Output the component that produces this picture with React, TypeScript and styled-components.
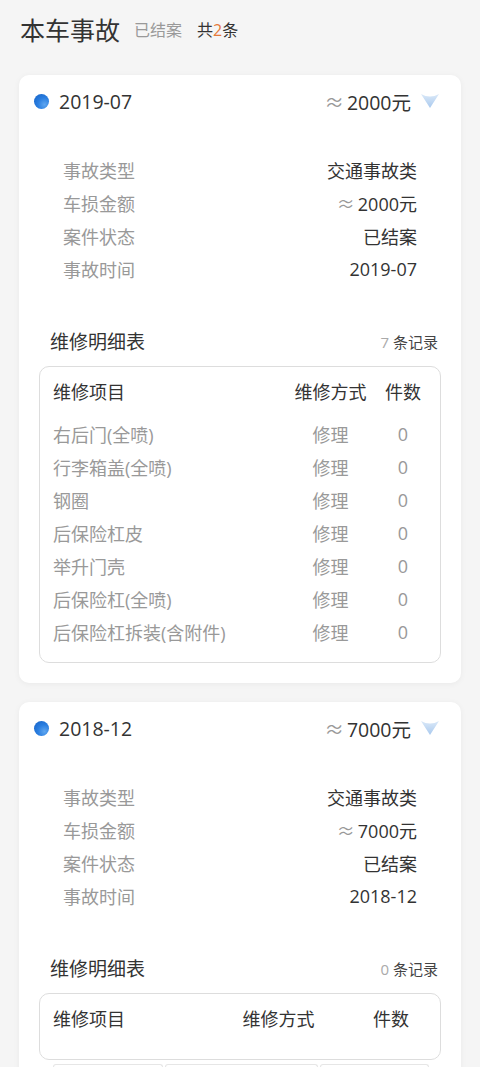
import styled, { createGlobalStyle } from "styled-components";

const GlobalStyle = createGlobalStyle`
  html, body {
    margin: 0;
    padding: 0;
    background: #f5f5f5;
  }
  body {
    font-family: "Open Sans", "Noto Sans CJK SC", sans-serif;
    color: #333;
  }
`;

const Page = styled.main`
  padding: 15px 19px 0;
  min-height: 1067px;
  box-sizing: border-box;
`;

const TitleRow = styled.div`
  display: flex;
  align-items: center;
  height: 30px;
  padding-left: 1px;
  margin-bottom: 30px;
`;

const Title = styled.h1`
  margin: 0;
  font-size: 25px;
  font-weight: 400;
  color: #333;
  line-height: 30px;
`;

const Status = styled.span`
  margin-left: 14px;
  font-size: 16px;
  color: #999;
  line-height: 30px;
`;

const Count = styled.span`
  margin-left: 15px;
  font-size: 16px;
  color: #333;
  line-height: 30px;

  b {
    font-weight: 400;
    color: #e5793a;
  }
`;

const Card = styled.section`
  background: #fff;
  border-radius: 10px;
  box-shadow: 0 1px 6px rgba(0, 0, 0, 0.05);
  padding-bottom: 20px;
  margin-bottom: 19px;
  overflow: hidden;
`;

const CardHeader = styled.div`
  display: flex;
  align-items: center;
  height: 52px;
  padding: 0 21px 0 15px;
`;

const Dot = styled.span`
  width: 15px;
  height: 15px;
  border-radius: 50%;
  background: radial-gradient(circle at 70% 70%, #5fa6f0 0%, #2a7ee0 45%, #1460c4 100%);
  margin-right: 10px;
  flex-shrink: 0;
`;

const DateText = styled.span`
  font-size: 19.5px;
  color: #333;
  flex: 1;
`;

const Approx = styled.i`
  font-style: normal;
  font-family: "Noto Sans CJK SC", sans-serif;
  color: #999;
  margin-right: 3px;
`;

const Amount = styled.span`
  font-size: 19.5px;
  color: #333;
`;

const ArrowIcon = () => (
  <svg width="20" height="16" viewBox="0 0 20 16" style={{ marginLeft: 9 }}>
    <defs>
      <linearGradient id="arr" x1="0" y1="0" x2="0" y2="1">
        <stop offset="0" stopColor="#dbe9f8" />
        <stop offset="1" stopColor="#a9c9ee" />
      </linearGradient>
    </defs>
    <path d="M1 1 Q10 6 19 1 L10 15 Z" fill="url(#arr)" />
  </svg>
);

const Details = styled.div`
  padding: 26px 44px 0;
`;

const DetailRow = styled.div`
  display: flex;
  justify-content: space-between;
  align-items: center;
  height: 33px;
  font-size: 18px;
`;

const Label = styled.span`
  color: #999;
`;

const Value = styled.span`
  color: #333;
`;

const SectionHead = styled.div`
  display: flex;
  justify-content: space-between;
  align-items: center;
  height: 30px;
  margin-top: 41px;
  padding: 0 23px 0 31px;
`;

const SectionTitle = styled.span`
  font-size: 19px;
  color: #333;
`;

const Records = styled.span`
  font-size: 15px;
  color: #444;

  b {
    font-weight: 400;
    color: #aaa;
    margin-right: 4px;
  }
`;

const TableBox = styled.div<{ $pb: number }>`
  margin: 10px 20px 0;
  border: 1px solid #ddd;
  border-radius: 10px;
  padding: 7px 13px ${(p) => p.$pb}px;
`;

const Grid = styled.div<{ $cols: string; $h: number }>`
  display: grid;
  grid-template-columns: ${(p) => p.$cols};
  align-items: center;
  height: ${(p) => p.$h}px;
  font-size: 18px;
`;

const HeadCell = styled.span<{ $center?: boolean }>`
  color: #333;
  text-align: ${(p) => (p.$center ? "center" : "left")};
`;

const Cell = styled.span<{ $center?: boolean }>`
  color: #999;
  text-align: ${(p) => (p.$center ? "center" : "left")};
  white-space: nowrap;
`;

const BodyRows = styled.div`
  margin-top: 9px;
`;

const EmptyGrid = styled.div`
  display: grid;
  grid-template-columns: 110px 153px 109px;
  gap: 2px;
  margin: 4px 34px 0 34px;
`;

const EmptyCell = styled.div`
  height: 20px;
  border: 1px solid #e6e6e6;
  border-bottom: none;
  border-radius: 3px 3px 0 0;
`;

type Item = { name: string; way: string; num: number };

type Accident = {
  date: string;
  amount: string;
  type: string;
  status: string;
  items: Item[];
  cols: string;
};

const accidents: Accident[] = [
  {
    date: "2019-07",
    amount: "2000元",
    type: "交通事故类",
    status: "已结案",
    cols: "1fr 97px 48px",
    items: [
      { name: "右后门(全喷)", way: "修理", num: 0 },
      { name: "行李箱盖(全喷)", way: "修理", num: 0 },
      { name: "钢圈", way: "修理", num: 0 },
      { name: "后保险杠皮", way: "修理", num: 0 },
      { name: "举升门壳", way: "修理", num: 0 },
      { name: "后保险杠(全喷)", way: "修理", num: 0 },
      { name: "后保险杠拆装(含附件)", way: "修理", num: 0 },
    ],
  },
  {
    date: "2018-12",
    amount: "7000元",
    type: "交通事故类",
    status: "已结案",
    cols: "151px 149px 76px",
    items: [],
  },
];

function AccidentCard({ a }: { a: Accident }) {
  const empty = a.items.length === 0;
  return (
    <Card>
      <CardHeader>
        <Dot />
        <DateText>{a.date}</DateText>
        <Amount>
          <Approx>≈</Approx>
          {a.amount}
        </Amount>
        <ArrowIcon />
      </CardHeader>
      <Details>
        <DetailRow>
          <Label>事故类型</Label>
          <Value>{a.type}</Value>
        </DetailRow>
        <DetailRow>
          <Label>车损金额</Label>
          <Value>
            <Approx>≈</Approx>
            {a.amount}
          </Value>
        </DetailRow>
        <DetailRow>
          <Label>案件状态</Label>
          <Value>{a.status}</Value>
        </DetailRow>
        <DetailRow>
          <Label>事故时间</Label>
          <Value>{a.date}</Value>
        </DetailRow>
      </Details>
      <SectionHead>
        <SectionTitle>维修明细表</SectionTitle>
        <Records>
          <b>{a.items.length}</b>条记录
        </Records>
      </SectionHead>
      <TableBox $pb={empty ? 24 : 14}>
        <Grid $cols={a.cols} $h={34}>
          <HeadCell>维修项目</HeadCell>
          <HeadCell $center>维修方式</HeadCell>
          <HeadCell $center>件数</HeadCell>
        </Grid>
        {!empty && (
          <BodyRows>
            {a.items.map((it) => (
              <Grid key={it.name} $cols={a.cols} $h={33}>
                <Cell>{it.name}</Cell>
                <Cell $center>{it.way}</Cell>
                <Cell $center>{it.num}</Cell>
              </Grid>
            ))}
          </BodyRows>
        )}
      </TableBox>
      {empty && (
        <EmptyGrid>
          <EmptyCell />
          <EmptyCell />
          <EmptyCell />
        </EmptyGrid>
      )}
    </Card>
  );
}

export default function App() {
  return (
    <>
      <GlobalStyle />
      <Page>
        <TitleRow>
          <Title>本车事故</Title>
          <Status>已结案</Status>
          <Count>
            共<b>2</b>条
          </Count>
        </TitleRow>
        {accidents.map((a) => (
          <AccidentCard key={a.date} a={a} />
        ))}
      </Page>
    </>
  );
}
